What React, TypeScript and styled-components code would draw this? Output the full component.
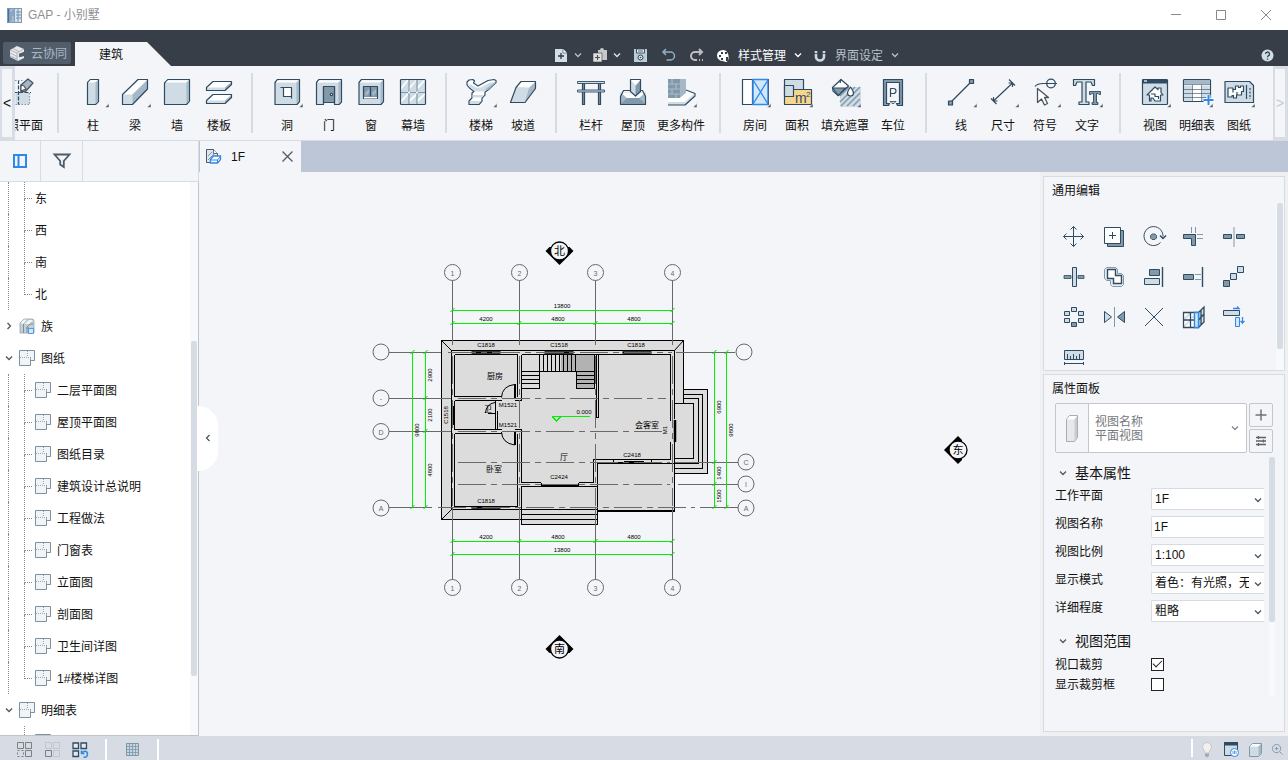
import React from "react";
import styled, { createGlobalStyle } from "styled-components";

const C = {
  ink: "#2f4b62",
  light: "#cfdce5",
  mid: "#a5b8c8",
  slate: "#8299aa",
  blue: "#2f88e8",
  paleBlue: "#d2e8fa",
  surface: "#f4f5f8",
  line: "#d6dce4",
};

const GlobalStyle = createGlobalStyle`
  * { box-sizing: border-box; }
  html, body { margin: 0; height: 100%; }
  body, button, input, select {
    font-family: "Liberation Sans", "Noto Sans CJK SC", sans-serif;
    font-size: 12px;
    color: #111;
  }
  button { border: 0; padding: 0; background: none; cursor: pointer; }
  svg { display: block; flex: none; overflow: visible; }
`;

/* ---------- shell ---------- */

const Shell = styled.div`
  display: flex;
  flex-direction: column;
  height: 100vh;
  overflow: hidden;
  background: ${C.surface};
`;

const TitleBar = styled.header`
  display: flex;
  align-items: center;
  height: 30px;
  flex: none;
  padding-left: 7px;
  gap: 6px;
  background: #fff;
`;

const WindowTitle = styled.h1`
  flex: 1;
  margin: 0;
  font-size: 12px;
  font-weight: 400;
  line-height: 16px;
  color: #8e9092;
`;

const WindowButtons = styled.div`
  display: flex;
`;

const WindowButton = styled.button`
  display: grid;
  place-items: center;
  width: 45px;
  height: 30px;
`;

const MenuBar = styled.nav`
  display: flex;
  align-items: flex-end;
  flex: none;
  height: 36px;
  padding-left: 3px;
  background: #383e48;
`;

const CloudButton = styled.button`
  display: flex;
  align-items: center;
  gap: 6px;
  width: 68px;
  height: 22px;
  margin: 0 4px 2px 0;
  padding-left: 6px;
  border-radius: 2px;
  background: #515d6a;
  color: #a9b8c6;
`;

const BarLabel = styled.span`
  padding-bottom: 2px;
`;

const RibbonTab = styled.button`
  width: 96px;
  height: 24px;
  padding: 0 0 2px 24px;
  text-align: left;
  background: ${C.surface};
  clip-path: polygon(0 0, 72px 0, 100% 100%, 0 100%);
`;

const QuickBar = styled.div`
  display: flex;
  align-items: center;
  gap: 11px;
  height: 22px;
  margin-left: 383px;
  flex: 1;
`;

const QuickButton = styled.button<{ $muted?: boolean; $wide?: boolean }>`
  display: flex;
  align-items: center;
  justify-content: center;
  gap: ${(p) => (p.$wide ? 8 : 6)}px;
  min-width: 17px;
  height: 20px;
  white-space: nowrap;
  color: ${(p) => (p.$muted ? "#b6c0ca" : "#fff")};
`;

const HelpButton = styled.button`
  display: grid;
  place-items: center;
  width: 14px;
  height: 22px;
  margin-right: 14px;
`;

/* ---------- ribbon ---------- */

const Ribbon = styled.section`
  display: flex;
  flex: none;
  height: 75px;
  border-bottom: 1px solid ${C.line};
`;

const RibbonScroll = styled.button`
  flex: none;
  width: 15px;
  height: 74px;
  border: 3px solid #d8dde5;
  border-width: 3px 3px 3px 2px;
  background: ${C.surface};
  font-size: 14px;
  &:disabled { color: #c3cad2; }
`;

const RibbonViewport = styled.div`
  flex: 1;
  min-width: 0;
  overflow: hidden;
`;

const RibbonStrip = styled.div`
  display: flex;
  width: max-content;
  margin-left: -36px;
`;

const RibbonGroup = styled.div`
  display: flex;
  padding: 0 11px 0 13px;
`;

const RibbonDivider = styled.hr`
  width: 2px;
  height: 60px;
  margin: 7px 0 0;
  border: 0;
  background: ${C.line};
`;

const Tool = styled.button<{ $wide?: boolean }>`
  display: flex;
  flex-direction: column;
  align-items: center;
  gap: 12px;
  width: ${(p) => (p.$wide ? 54 : 42)}px;
  padding-top: 12px;
  line-height: 16px;
  white-space: nowrap;
`;

/* ---------- body ---------- */

const Body = styled.div`
  display: flex;
  flex: 1;
  min-height: 0;
`;

const Browser = styled.aside`
  position: relative;
  display: flex;
  flex-direction: column;
  flex: none;
  width: 199px;
`;

const BrowserTools = styled.div`
  display: flex;
  flex: none;
  height: 41px;
  border-right: 1px solid ${C.line};
  border-bottom: 1px solid ${C.line};
`;

const BrowserTool = styled.button`
  display: grid;
  place-items: center;
  width: 41px;
  border-right: 1px solid ${C.line};
  & + & { width: 42px; }
`;

const TreePane = styled.div`
  display: flex;
  flex: 1;
  min-height: 0;
  border-right: 1px solid #c1c5cb;
  border-bottom: 1px solid #c1c5cb;
  background: #fff;
`;

const Tree = styled.ul`
  flex: 1;
  margin: 0;
  padding: 0;
  list-style: none;
  overflow: hidden;
`;

const TreeRow = styled.li`
  display: flex;
  align-items: center;
  height: 32px;
  padding-left: 4px;
  line-height: 16px;
  white-space: nowrap;
`;

const TreeLabel = styled.span`
  padding-top: 2px;
`;

const Toggle = styled.button`
  display: grid;
  place-items: center;
  width: 9px;
  height: 16px;
  margin-right: 6px;
`;

const TreeIcon = styled.span`
  width: 16px;
  margin-right: 6px;
`;

const Rail = styled.span<{ $hidden?: boolean }>`
  width: 16px;
  height: 32px;
  margin-left: 4px;
  border-left: 1px dotted ${(p) => (p.$hidden ? "transparent" : "#8a8a8a")};
`;

const Branch = styled.span<{ $last?: boolean }>`
  width: 8px;
  height: 32px;
  margin-right: 3px;
  &::before, &::after { content: ""; display: block; height: 16px; border-left: 1px dotted #8a8a8a; }
  &::before { border-bottom: 1px dotted #8a8a8a; }
  &::after { border-left-color: ${(p) => (p.$last ? "transparent" : "#8a8a8a")}; }
`;

const Track = styled.div<{ $w: number }>`
  flex: none;
  width: ${(p) => p.$w}px;
  background: #f7f9fa;
`;

const Thumb = styled.div<{ $top: number; $size: number }>`
  width: 6px;
  height: ${(p) => p.$size}px;
  margin: ${(p) => p.$top}px auto 0;
  border-radius: 2px;
  background: #d6dce4;
`;

const CollapseHandle = styled.button`
  position: absolute;
  left: 197px;
  top: 50%;
  display: grid;
  place-items: center;
  width: 21px;
  height: 65px;
  margin-top: -33px;
  border-radius: 0 20px 20px 0;
  background: #fff;
`;

const Main = styled.main`
  display: flex;
  flex-direction: column;
  flex: 1;
  min-width: 0;
`;

const DocTabs = styled.div`
  display: flex;
  flex: none;
  height: 31px;
  background: #bcc6d6;
`;

const DocTab = styled.div`
  display: flex;
  align-items: center;
  width: 102px;
  padding: 0 8px 0 6px;
  border-left: 1px solid #bcc6d6;
  background: ${C.surface};
`;

const DocName = styled.button`
  flex: 1;
  display: flex;
  align-items: center;
  gap: 10px;
`;

const Workspace = styled.div`
  display: flex;
  flex: 1;
  min-height: 0;
`;

const Viewport = styled.div`
  display: flex;
  justify-content: center;
  align-items: center;
  flex: 1;
  min-width: 0;
  overflow: hidden;
`;

const SideColumn = styled.aside`
  display: flex;
  flex-direction: column;
  flex: none;
  gap: 3px;
  width: 248px;
  padding: 4px 3px;
  background: #f0f0f0;
`;

const Panel = styled.section<{ $grow?: boolean }>`
  display: flex;
  flex-direction: column;
  flex: ${(p) => (p.$grow ? "1" : "0 0 195px")};
  min-height: 0;
  overflow: hidden;
  border: 1px solid ${C.line};
  background: ${C.surface};
`;

const PanelTitle = styled.h2`
  flex: none;
  margin: 0;
  padding: 6px 8px 4px;
  font-size: 12px;
  font-weight: 400;
  line-height: 16px;
`;

const Scroller = styled.div`
  display: flex;
  flex: 1;
  min-height: 0;
`;

const EditGrid = styled.div`
  display: grid;
  grid-template-columns: repeat(5, 40px);
  grid-auto-rows: 40px;
  flex: 1;
  padding: 14px 0 0 10px;
  overflow: hidden;
`;

const EditButton = styled.button`
  display: grid;
  place-items: center;
`;

const TypeRow = styled.div`
  display: flex;
  gap: 2px;
  padding: 2px 11px 4px 11px;
`;

const TypePicker = styled.button`
  display: flex;
  align-items: center;
  flex: 1;
  height: 50px;
  padding-right: 7px;
  border: 1px solid #c3c7cc;
  border-radius: 2px;
  background: #fff;
`;

const TypeThumb = styled.span`
  display: grid;
  place-items: center;
  width: 33px;
  height: 48px;
  border-right: 1px solid #c3c7cc;
  background: ${C.surface};
`;

const TypeText = styled.span`
  flex: 1;
  padding: 2px 0 0 6px;
  text-align: left;
  line-height: 14px;
  color: #75797e;
`;

const TypeButtons = styled.div`
  display: grid;
  gap: 2px;
`;

const TypeButton = styled.button`
  display: grid;
  place-items: center;
  width: 24px;
  height: 24px;
  border: 1px solid #c3c7cc;
  border-radius: 2px;
`;

const Properties = styled.div`
  flex: 1;
  padding-left: 11px;
  overflow: hidden;
`;

const PropsScroller = styled(Scroller)`
  flex: 0 0 240px;
  gap: 5px;
  padding-right: 9px;
`;

const SectionHead = styled.button<{ $compact?: boolean }>`
  display: flex;
  align-items: center;
  gap: 8px;
  height: ${(p) => (p.$compact ? 26 : 31)}px;
  padding-left: 4px;
  font-size: 14px;
  line-height: 18px;
`;

const Field = styled.div`
  display: grid;
  grid-template-columns: 96px 1fr;
  align-items: start;
  margin-bottom: 6px;
`;

const FieldLabel = styled.label`
  line-height: 16px;
`;

const FieldBox = styled.div`
  position: relative;
  height: 22px;
  border: 1px solid ${C.line};
  border-right: 0;
  border-radius: 2px 0 0 2px;
  background: #fff;
  & > svg { position: absolute; right: 2px; top: 7px; pointer-events: none; }
`;

const Select = styled.select`
  appearance: none;
  width: 97px;
  height: 20px;
  padding: 0 0 0 3px;
  border: 0;
  background: transparent;
  outline: none;
  text-overflow: clip;
`;

const TextInput = styled.input`
  width: 100%;
  height: 20px;
  padding: 0 0 0 2px;
  border: 0;
  background: transparent;
  outline: none;
`;

const CheckRow = styled.div`
  display: grid;
  grid-template-columns: 96px 1fr;
  align-items: center;
  height: 20px;
  line-height: 16px;
  & > label { padding-top: 2px; }
`;

const Checkbox = styled.input`
  appearance: none;
  display: grid;
  place-items: center;
  width: 13px;
  height: 13px;
  margin: 0;
  border: 1px solid #222;
  background: #fff;
  &:checked::before {
    content: "";
    width: 8px;
    height: 4px;
    margin-bottom: 3px;
    border: solid #222;
    border-width: 0 0 1px 1px;
    transform: rotate(-45deg);
  }
`;

/* ---------- status bar ---------- */

const StatusBar = styled.footer`
  display: flex;
  align-items: center;
  flex: none;
  height: 24px;
  padding: 3px 0 0 10px;
  background: #d7dce4;
`;

const StatusButton = styled.button<{ $w?: number }>`
  display: grid;
  place-items: center;
  width: ${(p) => p.$w ?? 28}px;
  height: 21px;
`;

const StatusDivider = styled.span<{ $tight?: boolean }>`
  width: 2px;
  height: ${(p) => (p.$tight ? 18 : 21)}px;
  margin: ${(p) => (p.$tight ? "0 2px 3px 0" : "0 11px")};
  background: #fff;
`;

const Spacer = styled.span`
  flex: 1;
`;

/* ---------- small glyphs ---------- */

const Chevron = ({ dir = "down", color = "#4c5763", size = 8 }: { dir?: "down" | "right" | "left"; color?: string; size?: number }) => {
  const d = { down: "M1 2.5 4 5.5 7 2.5", right: "M2.5 1 5.5 4 2.5 7", left: "M5.5 1 2.5 4 5.5 7" }[dir];
  return (
    <svg width={size} height={size} viewBox="0 0 8 8" fill="none" stroke={color} strokeWidth="1.3">
      <path d={d} />
    </svg>
  );
};

const AppLogo = () => (
  <svg width="15" height="15" viewBox="0 0 15 15">
    <rect width="15" height="15" fill="#7f9fbe" />
    <path d="M0 0h2v15H0z" fill="#4a7299" />
    <path d="M3 1h4v13H3z" fill="#a3bbd0" />
    <path d="M8 1h6v13H8z" fill="#d7e2eb" />
    <path d="M4 4v9M6 2v6M11 1v13M9 4h5M9 7h5M9 10h5" stroke="#6f93b3" fill="none" />
    <path d="M.5.5h14v14H.5z" fill="none" stroke="#7f9ab2" />
  </svg>
);

const CloudLogo = () => (
  <svg width="16" height="18" viewBox="0 0 16 18">
    <path d="M1 6 8 2l7 3v3l-5 2v3l5-1v2l-6 3-8-4z" fill="#e6e8ea" />
    <path d="M1 6l7 3 7-4M1 9l7 3.500M1 12l7 3M8 9v8M4 4.500l6 3" stroke="#9aa2aa" strokeWidth=".7" fill="none" />
    <path d="M10 10l5-2v4l-5 1z" fill="#515d6a" />
  </svg>
);

/* ---------- ribbon drawings (28 x 28) ---------- */

const Frame = () => (
  <>
    <path d="M2 4.500 4.500 1.500H26.500V23.500L24 26.500H2z" fill={C.light} stroke={C.ink} />
    <path d="M3 4.500 4.800 2.300H25.500L23.500 4.500z" fill="#fff" />
    <path d="M23.500 4.500 26 2.500V23L23.500 25.500z" fill={C.mid} />
  </>
);

const toolArt: Record<string, React.ReactNode> = {
  refplane: (
    <>
      <path d="M10.500 14.500h14v12h-14z" fill={C.light} />
      <path d="M13.500 2v25M3 14.500h23" stroke={C.ink} strokeDasharray="4 1.500" fill="none" />
      <path d="M7 2.500h12M24.500 15v11.500H4" stroke={C.slate} strokeDasharray="1.500 1.500" fill="none" />
      <path d="M16 7 23 1l5 4-7 8-5 1z" fill={C.mid} stroke="#4a545e" strokeWidth="1.3" />
      <path d="M16 7l3 1 2 3-5 2z" fill="#fff" stroke="#4a545e" />
    </>
  ),
  column: (
    <>
      <path d="M8.500 4.500 11.500 1.500h8v22l-3 3h-8z" fill={C.light} stroke={C.ink} />
      <path d="M9 4.500 11.700 2h7.300l-2.500 2.500z" fill="#fff" />
      <path d="M16.500 4.500 19 2v21.500L16.500 26z" fill={C.mid} />
    </>
  ),
  beam: (
    <>
      <path d="M1.500 16.500 17 1.500h9.500v9.500L11.500 26.500h-10z" fill={C.light} />
      <path d="M2 16.500 17 2h9L11.500 16.500z" fill="#fff" />
      <path d="M11.500 16.500 26.500 2v9L11.500 26.500z" fill={C.mid} />
      <path d="M1.500 16.500 17 1.500h9.500v9.500L11.500 26.500h-10z" fill="none" stroke={C.ink} />
    </>
  ),
  wall: (
    <>
      <path d="M1.500 5 5 1.500H26.500V23L23.500 26.500H1.500z" fill={C.light} stroke={C.ink} />
      <path d="M2.500 4.500 5 2.200H25.500L23.500 4.500z" fill="#fff" />
      <path d="M23.500 4.500 26 2.500V23L23.500 25.500z" fill={C.mid} />
    </>
  ),
  slab: (
    <>
      {[3, 16].map((y) => (
        <g key={y} transform={`translate(0 ${y})`}>
          <path d="M1.500 7.500 8 .5H26.500V3.500L20 9.500H1.500z" fill={C.light} />
          <path d="M2 6.500 8 1H26L20 6.500z" fill="#fff" />
          <path d="M20 6.500 26.500 1v2.500L20 9.500z" fill={C.mid} />
          <path d="M1.500 6.500 8 .5H26.500V3.500L20 9.500H1.500z" fill="none" stroke={C.ink} />
        </g>
      ))}
    </>
  ),
  opening: (
    <>
      <Frame />
      <path d="M10.500 10h8v8.500h-8z" fill="#fff" />
      <path d="M7.500 9.500h11v11M10.500 9.500v9h8" fill="none" stroke={C.ink} />
    </>
  ),
  door: (
    <>
      <path d="M1.500 4.500 4 1.500H26.500V24L24 26.500H19.500V8.500H8.500V26.500H1.500z" fill={C.light} stroke={C.ink} />
      <path d="M2.500 4.500 4.300 2.300H25.500L23.500 4.500z" fill="#fff" />
      <path d="M23.500 4.500 26 2.500V23.500L23.500 26z" fill={C.mid} />
      <path d="M8.500 8.500h11v16h-11z" fill={C.slate} stroke={C.ink} />
      <circle cx="16.500" cy="16.500" r="1.200" fill="#fff" stroke={C.ink} />
    </>
  ),
  window: (
    <>
      <Frame />
      <path d="M6.500 8.500h14v12h-14z" fill={C.slate} stroke={C.ink} />
      <path d="M8 15l4-4v4l-3 3zM15 15l4-4v4l-3 3z" fill={C.mid} />
      <path d="M13.500 8.500v10" stroke={C.ink} />
      <path d="M7 19h13v1.500H7z" fill="#fff" />
    </>
  ),
  curtain: (
    <>
      <rect x="1.500" y="1.500" width="25" height="25" fill={C.light} />
      <path d="M2 9l6-7h2L2 12zM10 9l7-7h1L10 12zM18 9l7-7h1v1l-8 9zM2 22l7-7v2l-7 8zM10 22l8-7v2l-8 8zM18 22l8-7v2l-8 8z" fill="#fff" />
      <path d="M10 2v24M18 2v24M2 14.500h24" stroke={C.slate} fill="none" />
      <rect x="1.500" y="1.500" width="25" height="25" rx="1" fill="none" stroke={C.ink} />
      <circle cx="10" cy="14.500" r="1" fill="#fff" />
      <circle cx="18" cy="14.500" r="1" fill="#fff" />
    </>
  ),
  stair: (
    <>
      <path
        d="M0 4 2 2 6 1.500 7.500 3 6.500 5 11 8 21 2.500 27 1.500 29 2.500V4.500L21 12 18 14V17L15 20V23L12 26.500H2V23L5 20V15L7 13.500 2 9.500 0 7z"
        fill="#fff"
        stroke={C.ink}
      />
      <path d="M.8 6.500 4 6.500 9 9.500h5L22 5l5-1-7 7.500-3 2H8L2.500 9zM5.500 17h12L15 19.500H5.500zM3 23h11.500l-3 3H3z" fill={C.light} />
      <path d="M18 11.500 28.500 3.500V5L21 12z" fill={C.mid} />
    </>
  ),
  ramp: (
    <>
      <path d="M1.500 24.500 7 9.500l5-6h14.500v7L16 24.500z" fill={C.light} />
      <path d="M7 9 12 4h14l-6 5.500z" fill="#fff" />
      <path d="M20 10 26.500 4v7L16 24z" fill={C.mid} />
      <path d="M1.500 24.500 7 9.500l5-6h14.500v7L16 24.500z" fill="none" stroke={C.ink} />
    </>
  ),
  railing: (
    <>
      <path d="M5.500 5.500h2v21h-2zM21.500 5.500h2v21h-2z" fill={C.slate} stroke={C.ink} />
      <path d="M.5 3.500h27v2H.5zM.5 12h27v2H.5z" fill={C.light} stroke={C.ink} strokeWidth=".9" />
    </>
  ),
  roof: (
    <>
      <path d="M1.500 14.500h25v12h-25z" fill={C.mid} />
      <path d="M1.500 26 8 20h12l6.500 6z" fill={C.slate} />
      <path d="M1.500 14.500h25L20 20H8z" fill="#fff" />
      <path d="M11.500 2h10v11L16.500 18l-5-5z" fill={C.light} />
      <path d="M16.500 8l5-6v11l-5 5z" fill={C.slate} />
      <path d="M11.500 2h10l-5 5z" fill="#fff" />
      <path d="M11.500 12.500h-7l-3 6v8h25v-8l-3-6h-2M11.500 1.500h10v12l-5 4.500-5-4.500z" fill="none" stroke={C.ink} />
    </>
  ),
  parts: (
    <>
      <path d="M1 1h12v19H1z" fill={C.slate} />
      <path d="M13 4l6-3v14l-6 5z" fill={C.mid} />
      <path d="M13 1h6v3l-6 3z" fill={C.mid} />
      <path d="M1 6h12M1 11h12M1 16h12M5 1v5M9 6v5M5 11v5M9 16v4" stroke="#a9bccb" fill="none" />
      <path d="M1 20h12l6-5v-3l9 4v2l-9 9H1z" fill="#fff" />
      <path d="M1 27v-3h17l9-8.500V18l-8 9z" fill={C.light} />
      <path d="M19 12l9 3.500v2.500L18 27H1" fill="none" stroke={C.ink} />
    </>
  ),
  room: (
    <>
      <path d="M1.500 1.500h10v25h-10z" fill="#fff" stroke={C.ink} />
      <path d="M12 1.500h15v25H12z" fill={C.paleBlue} stroke={C.blue} strokeWidth="1.500" />
      <path d="M12 2l15 24M27 2 12 26" stroke={C.blue} strokeWidth="1.300" />
      <path d="M27.500 1v26" stroke={C.ink} strokeWidth=".7" />
    </>
  ),
  area: (
    <>
      <path d="M1.500 1.500h19v10h-19z" fill={C.light} stroke={C.ink} />
      <path d="M1.500 11.500h27v15h-27z" fill="#f6d78d" stroke={C.ink} />
      <path d="M1.500 7.500h9v11h-9z" fill={C.light} stroke={C.ink} />
      <text x="12" y="25" fontSize="14" fill={C.ink}>m</text>
      <text x="23" y="19" fontSize="8" fill={C.ink}>2</text>
    </>
  ),
  fill: (
    <>
      <path d="M9 9h21v20H9z" fill={C.light} />
      <path d="M9 18l9-9M9 24 24 9M10 28l19-19M16 28l13-13M22 28l7-7" stroke={C.slate} strokeWidth="1.500" />
      <path d="M1.500 9.500 10 1.500l7.500 6.500L7 17.500 2 13z" fill="#fff" stroke={C.ink} />
      <path d="M1.500 10h13l-7 7.500z" fill={C.slate} stroke={C.ink} />
      <path d="M10 1.500 9 5" stroke={C.ink} />
      <path d="M19.500 9c2 3 3 4 3 6a3 3 0 0 1-6 0c0-2 1-3 3-6z" fill="#fff" stroke={C.ink} />
    </>
  ),
  parking: (
    <>
      <path d="M4.500 1.500h19v26h-5l-1-2h3V4.500H7.500v21h3l-1 2h-5z" fill={C.slate} stroke={C.ink} />
      <path d="M11.500 19V10.500H14.500a2.500 2.500 0 0 1 0 5h-3" fill="none" stroke={C.ink} strokeWidth="1.200" />
      <path d="M11 23.500h6l-2 2h-2z" fill={C.light} stroke={C.ink} strokeWidth=".8" />
    </>
  ),
  line: (
    <>
      <path d="M3.500 24.500 25 3" stroke={C.ink} />
      <path d="M1.500 23h4v4h-4zM22.500 1.500h4v4h-4z" fill={C.slate} stroke={C.ink} />
    </>
  ),
  dimension: (
    <path d="M4.500 23 23.500 5M2 20.500 7.500 26M20 1.500 26 7.500M4.500 23v-4M4.500 23h4M23.500 5h-4M23.500 5v4" fill="none" stroke={C.ink} />
  ),
  symbol: (
    <>
      <path d="M4 8.500C6 6 8 5.500 12 5.500h14" fill="none" stroke={C.ink} />
      <circle cx="20" cy="5.500" r="4.300" fill="none" stroke={C.ink} strokeWidth="1.300" />
      <path d="M6.500 10.500v14l4-3.500 3 6 3-1.500-3-6h4z" fill="#fff" stroke="#4a545e" strokeWidth="1.300" />
    </>
  ),
  text: (
    <>
      <path d="M.5 1.500h21v6h-2L18 4h-5v20h3v2.500H6V24h3V4H4L2.500 7.500h-2z" fill={C.light} stroke={C.ink} />
      <path d="M16.500 13.500h11v3H26L25 15.500h-1.500v9h1.500v2h-6v-2h1.500v-9H19l-1 1h-1.500z" fill={C.slate} stroke={C.ink} strokeWidth=".9" />
    </>
  ),
  view: (
    <>
      <rect x="1.500" y="1.500" width="25" height="25" rx="1" fill={C.light} stroke={C.ink} />
      <path d="M1.500 1.500h25v4h-25z" fill={C.ink} />
      <path d="M3 3h3" stroke="#fff" />
      <path d="M6 17l8-8 3 2.500V10h3v4.500l2 2.500h-2.500v6H14l-2-3h-2v3H8.500v-6z" fill="#fff" stroke={C.ink} />
      <path d="M10 16h4v2.500h3.500V21" fill="none" stroke={C.ink} />
    </>
  ),
  schedule: (
    <>
      <rect x=".5" y="1.500" width="27" height="22" rx="1" fill="#fff" stroke={C.ink} />
      <path d="M1 2h26v4H1z" fill={C.mid} />
      <path d="M1 7.500h8v15.500H1zM19 7.500h8v15.500h-8z" fill={C.light} />
      <path d="M1 6.500h26M1 11.500h26M1 15.500h26M1 19.500h26M9.500 7v16M18.500 7v16" stroke={C.ink} strokeWidth=".8" opacity=".75" />
      <path d="M25.500 17v10M20.500 22h10" stroke="#fff" strokeWidth="4" />
      <path d="M25.500 17v10M20.500 22h10" stroke={C.blue} strokeWidth="2" />
    </>
  ),
  sheet: (
    <>
      <path d="M0 3.500h24.500l4 4v17H0z" fill={C.light} stroke={C.ink} strokeWidth="1.200" />
      <path d="M3 10h5v1.500h2.500V8h3v1.500h2V8h3v5.500h-2v3.500h-5v3h-3v-2.500H7v1.500H3z" fill="#fff" stroke={C.ink} />
      <path d="M8 11.500v3M12 14v3" stroke={C.ink} />
      <path d="M21.500 7v14" stroke={C.ink} />
      <path d="M25 10v11" stroke={C.ink} strokeDasharray="2 1.500" />
    </>
  ),
};

const ToolIcon = ({ name, menu }: { name: string; menu?: boolean }) => (
  <svg width="28" height="28" viewBox="0 0 28 28" fill="none" strokeWidth="1.200" strokeLinejoin="round">
    {toolArt[name]}
    {menu && <path d="M26 29.500h4V25.500z" fill="#4d5359" stroke="#f4f5f8" strokeWidth=".6" />}
  </svg>
);

type ToolDef = { icon: string; label: string; menu?: boolean; wide?: boolean };

const ribbonGroups: ToolDef[][] = [
  [{ icon: "refplane", label: "参照平面", wide: true }],
  [
    { icon: "column", label: "柱", menu: true },
    { icon: "beam", label: "梁", menu: true },
    { icon: "wall", label: "墙" },
    { icon: "slab", label: "楼板" },
  ],
  [
    { icon: "opening", label: "洞", menu: true },
    { icon: "door", label: "门" },
    { icon: "window", label: "窗" },
    { icon: "curtain", label: "幕墙" },
  ],
  [
    { icon: "stair", label: "楼梯", menu: true },
    { icon: "ramp", label: "坡道" },
  ],
  [
    { icon: "railing", label: "栏杆" },
    { icon: "roof", label: "屋顶" },
    { icon: "parts", label: "更多构件", menu: true, wide: true },
  ],
  [
    { icon: "room", label: "房间", menu: true },
    { icon: "area", label: "面积", menu: true },
    { icon: "fill", label: "填充遮罩", menu: true, wide: true },
    { icon: "parking", label: "车位" },
  ],
  [
    { icon: "line", label: "线", menu: true },
    { icon: "dimension", label: "尺寸", menu: true },
    { icon: "symbol", label: "符号", menu: true },
    { icon: "text", label: "文字", menu: true },
  ],
  [
    { icon: "view", label: "视图", menu: true },
    { icon: "schedule", label: "明细表", menu: true },
    { icon: "sheet", label: "图纸", menu: true },
  ],
];

/* ---------- quick access ---------- */

const quickArt: Record<string, React.ReactNode> = {
  create: (
    <>
      <path d="M1 1h8l4 4v9H1z" fill="#d2dfe8" />
      <path d="M9 1v4h4" fill="#fff" stroke="#383e48" strokeWidth=".6" />
      <path d="M7 5v6M4 8h6" stroke="#2f3a46" strokeWidth="1.300" />
    </>
  ),
  paste: (
    <>
      <path d="M5 2h2a2 2 0 0 1 4 0h3v10H5z" fill="#c8c8c8" />
      <path d="M0 5h9v9H0z" fill="#e0e0e0" stroke="#383e48" strokeWidth=".6" />
      <path d="M4.500 7v5M2 9.500h5" stroke="#4a4f56" strokeWidth="1.200" />
    </>
  ),
  save: (
    <>
      <path d="M0 1h13v13H0z" fill="#b9cedc" />
      <path d="M2.500 1h8v4h-8z" fill="#e8eef2" stroke="#383e48" strokeWidth=".9" />
      <path d="M4 3h5" stroke="#383e48" strokeWidth=".8" />
      <circle cx="6.500" cy="9.500" r="2.500" fill="#dce7ee" stroke="#383e48" />
      <circle cx="6.500" cy="9.500" r=".8" fill="#383e48" />
    </>
  ),
  undo: <path d="M4 1 1 4l3 3M1 4h7.500a4 4 0 0 1 0 8H4.500" fill="none" stroke="#8fb0c8" strokeWidth="1.500" />,
  redo: <path d="M9 1l3 3-3 3M12 4H5a4 4 0 0 0 0 8h2M9 12h1M12 12h1" fill="none" stroke="#bdbdbd" strokeWidth="2" />,
  palette: (
    <>
      <path d="M7 2a6 5.500 0 1 0 0 11c1 0 1 1 3 1 4 0 4-12-3-12z" fill="#fff" />
      <path d="M3 7h2v2H3zM5 4h2v2H5zM9 4h2v2H9zM5 10h2v2H5zM10 9h2v4h-2z" fill="#383e48" />
    </>
  ),
  magnet: (
    <>
      <path d="M3 3v5.500a4 4 0 0 0 8 0V3" fill="none" stroke="#c9d9e6" strokeWidth="2.600" />
      <path d="M1 5.500h4M9 5.500h4" stroke="#383e48" strokeWidth=".8" />
    </>
  ),
};

const QuickIcon = ({ name }: { name: string }) => (
  <svg width="14" height="15" viewBox="0 0 14 15">{quickArt[name]}</svg>
);

/* ---------- browser tree ---------- */

const SheetIcon = () => (
  <svg width="16" height="16" viewBox="0 0 16 16" fill="none">
    <path d="M.5.5h15v10h-4v5H.5z" fill="#f1f4f7" stroke="#7f90a3" />
    <path d="M8.500 1v6" stroke="#9aa8b6" strokeDasharray="1 1" />
    <path d="M1 7.500h9" stroke="#9aa8b6" strokeDasharray="1 1" />
    <path d="M11.500 7v3.500h4" stroke="#7f90a3" strokeWidth=".8" />
  </svg>
);

const FamilyIcon = () => (
  <svg width="16" height="16" viewBox="0 0 16 16">
    <path d="M1 5l4-4h9l1 2v12H1z" fill="#c4ced7" />
    <path d="M1 5l4-4h3L4 6zM6 6l4-4h4l-4 4z" fill="#f2f5f7" />
    <path d="M4.500 6v9M8 15V9l3-3h3M10 10H7" stroke="#7d8d9b" fill="none" />
    <path d="M1 5l4-4h9l1 2v12H1z" stroke="#95a3af" strokeWidth=".8" fill="none" />
    <path d="M9.500 10.500h5v5h-5z" fill={C.paleBlue} stroke={C.blue} strokeWidth=".8" />
  </svg>
);

type Node = { label: string; kind: "view" | "sheet" | "parent"; last?: boolean; open?: boolean; icon?: "family" | "sheet"; noRail?: boolean };

const nodes: Node[] = [
  { label: "东", kind: "view" },
  { label: "西", kind: "view" },
  { label: "南", kind: "view" },
  { label: "北", kind: "view", last: true },
  { label: "族", kind: "parent", icon: "family" },
  { label: "图纸", kind: "parent", icon: "sheet", open: true },
  { label: "二层平面图", kind: "sheet" },
  { label: "屋顶平面图", kind: "sheet" },
  { label: "图纸目录", kind: "sheet" },
  { label: "建筑设计总说明", kind: "sheet" },
  { label: "工程做法", kind: "sheet" },
  { label: "门窗表", kind: "sheet" },
  { label: "立面图", kind: "sheet" },
  { label: "剖面图", kind: "sheet" },
  { label: "卫生间详图", kind: "sheet" },
  { label: "1#楼梯详图", kind: "sheet", last: true },
  { label: "明细表", kind: "parent", icon: "sheet", open: true },
  { label: "", kind: "sheet", noRail: true },
];

const TreeNode = ({ node }: { node: Node }) =>
  node.kind === "parent" ? (
    <TreeRow>
      <Toggle aria-label={`展开 ${node.label}`}>
        <Chevron dir={node.open ? "down" : "right"} />
      </Toggle>
      <TreeIcon>{node.icon === "family" ? <FamilyIcon /> : <SheetIcon />}</TreeIcon>
      <TreeLabel>{node.label}</TreeLabel>
    </TreeRow>
  ) : (
    <TreeRow>
      <Rail $hidden={node.noRail} />
      <Branch $last={node.last} />
      {node.kind === "sheet" && (
        <TreeIcon>
          <SheetIcon />
        </TreeIcon>
      )}
      <TreeLabel>{node.label}</TreeLabel>
    </TreeRow>
  );

/* ---------- edit commands (24 x 24) ---------- */

const editArt: [string, React.ReactNode][] = [
  ["移动", <path d="M11.500 1.500v20M1.500 11.500h20M8.500 4.500l3-3 3 3M8.500 18.500l3 3 3-3M4.500 8.500l-3 3 3 3M18.500 8.500l3 3-3 3" stroke={C.ink} fill="none" />],
  ["复制", <><path d="M5.500 5.500h16v16h-16z" fill={C.slate} stroke={C.ink} /><path d="M2.500 2.500h16v16h-16z" fill="#fff" stroke={C.ink} /><path d="M10.500 7v7M7 10.500h7" stroke={C.ink} /></>],
  ["旋转", <><path d="M18.500 17.500A9.500 9.500 0 1 1 21 11.500" fill="none" stroke={C.ink} /><path d="M18 10.500l3 3 3-3" fill="none" stroke={C.ink} strokeWidth="1.500" /><path d="M10 9h3l1.500 1.500v2.500L13 14.500h-3L8.500 13v-2.500z" fill={C.slate} stroke={C.ink} strokeWidth=".8" /></>],
  ["修剪", <><path d="M1.500 9.500h12v11h-4v-7h-8z" fill={C.slate} stroke={C.ink} /><path d="M9.500 2v6M13.500 2v6M15 9.500h6M15 13.500h6" stroke={C.slate} /></>],
  ["打断", <><path d="M1.500 9.500h8v4h-8zM14.500 9.500h8v4h-8z" fill={C.slate} stroke={C.ink} /><path d="M12 2v20" stroke={C.slate} /></>],
  ["拆分", <><path d="M2 10.500h7v3H2zM16 10.500h6v3h-6z" fill={C.slate} stroke={C.ink} strokeWidth=".8" /><path d="M10.500 2.500h4v19h-4z" fill={C.light} stroke={C.ink} /></>],
  ["合并", <><path d="M2.500 4.500l2-2h9l2 2v4h4l2 2v9l-2 2h-9l-2-2v-4h-4l-2-2z" fill="#e6ecf1" stroke={C.slate} /><path d="M5.500 4.500h8v6h6v8h-8v-5h-6z" fill="#fff" stroke={C.ink} strokeWidth="1.400" /></>],
  ["对齐", <><path d="M7.500 4.500h10v6h-10z" fill={C.slate} stroke={C.ink} /><path d="M2.500 13.500h15v6h-15z" fill={C.light} stroke={C.ink} /><path d="M20.500 2v20" stroke={C.ink} strokeWidth="1.400" /></>],
  ["延伸", <><path d="M1.500 9.500h10v5h-10z" fill={C.slate} stroke={C.ink} /><path d="M13 9.500h6M13 14.500h6" stroke={C.slate} /><path d="M20.500 2v20" stroke={C.ink} strokeWidth="1.400" /></>],
  ["线性阵列", <><path d="M1.500 15.500h6v6h-6z" fill={C.slate} stroke={C.ink} /><path d="M8.500 8.500h6v6h-6zM15.500 1.500h6v6h-6z" fill={C.light} stroke={C.ink} /></>],
  ["环形阵列", <><path d="M9.500 2.500h5v4h-5zM2.500 6.500h5v4h-5zM16.500 6.500h5v4h-5zM2.500 13.500h5v4h-5zM16.500 13.500h5v4h-5z" fill={C.light} stroke={C.ink} /><path d="M9.500 17.500h5v4h-5z" fill={C.slate} stroke={C.ink} /></>],
  ["镜像", <><path d="M2.500 6.500v11l7-5.500z" fill={C.light} stroke={C.ink} /><path d="M22.500 6.500v11l-7-5.500z" fill={C.slate} stroke={C.ink} /><path d="M12.500 2v20" stroke={C.slate} /></>],
  ["删除", <path d="M3 3l18 18M21 3 3 21" stroke={C.ink} />],
  ["体块", <><path d="M1.500 7.500h15v15h-15z" fill="#fff" /><path d="M2 13l5-5h1v2l-6 6zM9 13l4-4v4zM2 20l6-5v2l-6 5zM16.500 7.500l5-5v14l-5 6z" fill={C.light} /><path d="M1.500 7.500h15v15h-15zM1.500 15h15M8.500 7.500v15M16.500 7.500l5.500-5.500v15l-5.500 5.500M19 5v15M16.500 15l5.500-6" fill="none" stroke={C.ink} strokeWidth="1.300" /><path d="M12.500 7.500h4v15h-4z" fill={C.paleBlue} stroke={C.blue} strokeWidth="1.400" /></>],
  ["偏移", <><path d="M1.500 5.500h16v5h-16z" fill={C.light} stroke={C.ink} /><path d="M13.500 12.500h4v9h-4z" fill={C.paleBlue} stroke={C.blue} /><path d="M11 3.500h6l-2-2M20.500 12v6l2-2M20.500 18l-2-2" fill="none" stroke={C.blue} strokeWidth="1.300" /></>],
  ["测量", <><path d="M2.500 5.500h19v9h-19z" fill={C.light} stroke={C.ink} /><path d="M5.500 14V9M8.500 14v-3M11.500 14V9M14.500 14v-3M17.500 14V9M2 18.500h20M2.500 17v3M21.500 17v3" stroke={C.ink} /></>],
];

/* ---------- floor plan ---------- */

const G = "#696969";

const Bubble = ({ x, y, label }: { x: number; y: number; label?: string }) => (
  <>
    <circle cx={x} cy={y} r="8" fill={C.surface} stroke={G} />
    {label && (
      <text x={x} y={y + 3} fontSize="7" fill={G} textAnchor="middle">
        {label}
      </text>
    )}
  </>
);

const Note = ({ x, y, children, size = 6, vertical }: { x: number; y: number; children: string; size?: number; vertical?: boolean }) => (
  <text
    x={x}
    y={y + 2}
    fontSize={size}
    fill="#000"
    textAnchor="middle"
    transform={vertical ? `rotate(-90 ${x} ${y})` : undefined}
  >
    {children}
  </text>
);

const Compass = ({ x, y, turn, label }: { x: number; y: number; turn: number; label: string }) => (
  <>
    <path d={`M${x - 14} ${y}L${x} ${y - 14}L${x + 14} ${y}L${x + 10} ${y + 4}H${x - 10}z`} transform={`rotate(${turn} ${x} ${y})`} fill="#000" />
    <circle cx={x} cy={y} r="9" fill={C.surface} stroke="#000" strokeWidth="1.300" />
    <text x={x} y={y + 4} fontSize="11" textAnchor="middle" fill="#000">
      {label}
    </text>
  </>
);

const columnAxes = [452.5, 519.5, 595.5, 672.5];
const dash = "28 5 6 5";

const FloorPlan = () => (
  <svg width="841" height="564" viewBox="199 172 841 564" role="img" aria-label="1F 平面图" fill="none" stroke="none">
    {/* slabs, eaves and steps */}
    <path d="M441.500 340.500H683.500V389.500H707.500V473.500H674.500V510.500H597.500V524.500H521.500V519.500H441.500z" fill="#dcdcdc" />
    <path d="M561 354.500H594.500V388.500H576.500V371.500H561z" fill="#b2b2b2" />

    <g stroke="#000" shapeRendering="crispEdges">
      <path d="M683.500 403.500V340.500H441.500V519.500H597.500" />
      <path d="M451.500 509.500V350.500H674.500V419M451.500 509.500H597.500" />
      <path d="M441.500 340.500l10 10M683.500 340.500l-9 10M441.500 519.500l10-10" shapeRendering="auto" />
      <path d="M454.500 354.500H517.500V396.500M454.500 354.500V396.500H502M521.500 400.500H515" />
      <path d="M454.500 400.500V429.500H501.500M454.500 400.500H502M495.500 400.500V429.500M497 411V429" />
      <path d="M454.500 433.500V506.500H517.500V433.500M454.500 433.500H501.500M515 429.500H521.500" />
      <path d="M521.500 354.500H670.500V420.500M521.500 354.500V400.500M521.500 429.500V482.500H541M579 482.500H593.500V459.500H670.500V442" />
      <path d="M521.500 524.500V486.500H597.500V524.500zM597.500 486.500V463.500H674.500V442M521.500 514.500H597.500M521.500 519.500H597.500" />
      <path d="M596.500 354.500V417.500H598.500V354.500" />
      <path d="M597.500 510.500H674.500" strokeWidth="2" />
      <path d="M674.500 463.500V510.500" />
      <path d="M683.500 389.500H707.500V473.500H674.500M683.500 394.500H702.500V468.500H674.500M683.500 398.500H698.500V463.500H674.500M674.500 403.500H693.500V458.500H674.500" />
      <path d="M521.500 371.500H576.500M539.500 354.500V388.500M521.500 375.500h18M521.500 379.500h18M521.500 383.500h18M521.500 388.500h18" />
      <path d="M543.500 354.500v17M547.500 354.500v17M551.500 354.500v17M555.500 354.500v17M559.500 354.500v17M563.500 354.500v17M567.500 354.500v17M571.500 354.500v17M575.500 354.500v17" />
      <path d="M576.500 371.500V388.500H594.500V354.500M576.500 371.500h18M576.500 375.500h18M576.500 379.500h18M576.500 383.500h18" />
      <path d="M541.500 482.500v4M578.500 482.500v4M613.500 459.500v3h38v-3" />
      <path d="M488 413.500h7.500" />
    </g>

    {/* windows and door leaves */}
    <path
      d="M471.500 352.500h29M544.500 352.500h29M622.500 352.500h29M471.500 507.500h29M453 406v19M675 420v22"
      stroke="#000"
      strokeWidth="2.500"
    />
    <path d="M541 485.500h38M624 462h20" stroke="#000" strokeWidth="2" />
    <path d="M515 384v15M515 431v14" stroke="#000" strokeWidth="2" />
    <path d="M514.500 384.500Q502 386 501.500 397.500M514.500 445Q502 443 501.500 432M495 402.500Q486 404 485.500 413" stroke="#000" />

    {/* axes */}
    <g stroke={G} shapeRendering="crispEdges">
      {columnAxes.map((x) => (
        <React.Fragment key={x}>
          <path d={`M${x} 280V345M${x} 508V580`} />
          <path d={`M${x} 356V506`} strokeDasharray={dash} />
        </React.Fragment>
      ))}
      <path d="M389 352.500H441M389 398.500H451M389 431.500H451M389 507.500H432" />
      <path d="M676 352.500H735M675 462.500H738M678 484.500H738M700 507.500H738" />
      <path
        d="M448 352.500H672M458 398.500H565M570 398.500H666M458 431.500H666M458 462.500H670M458 484.500H670M438 507.500H695"
        strokeDasharray={dash}
      />
    </g>

    {/* dimension strings */}
    <g stroke="#00f000" shapeRendering="crispEdges">
      <path d="M452 310.500H673M452 323.500H673M452 541.500H673M452 554.500H673" />
      <path d="M412.500 352V508M425.500 352V508M714.500 352V508M726.500 352V508" />
      <path d="M552 416.500H590M552.500 417l4 4 4-4" />
    </g>
    <g stroke="#00d000">
      {columnAxes.map((x) => (
        <path key={x} d={`M${x - 2} 325l4-4M${x - 2} 543l4-4`} />
      ))}
      <path d="M450.500 312l4-4M670.500 312l4-4M450.500 556l4-4M670.500 556l4-4" />
      <path d="M423.500 354l4-4M423.500 400l4-4M423.500 433l4-4M423.500 509l4-4M410.500 354l4-4M410.500 509l4-4" />
      <path d="M712.500 354l4-4M712.500 464l4-4M712.500 486l4-4M712.500 509l4-4M724.500 354l4-4M724.500 509l4-4" />
    </g>

    <Note x={562} y={306}>13800</Note>
    <Note x={486} y={319}>4200</Note>
    <Note x={558} y={319}>4800</Note>
    <Note x={634} y={319}>4800</Note>
    <Note x={486} y={537}>4200</Note>
    <Note x={558} y={537}>4800</Note>
    <Note x={634} y={537}>4800</Note>
    <Note x={562} y={550}>13800</Note>
    <Note x={430} y={375} vertical>2900</Note>
    <Note x={430} y={415} vertical>2100</Note>
    <Note x={430} y={470} vertical>4800</Note>
    <Note x={417} y={430} vertical>9800</Note>
    <Note x={719} y={407} vertical>6900</Note>
    <Note x={719} y={473} vertical>1400</Note>
    <Note x={719} y={496} vertical>1500</Note>
    <Note x={731} y={430} vertical>9800</Note>
    <Note x={486} y={345}>C1818</Note>
    <Note x={559} y={345}>C1518</Note>
    <Note x={636} y={345}>C1818</Note>
    <Note x={446} y={415} vertical>C1518</Note>
    <Note x={486} y={501}>C1818</Note>
    <Note x={559} y={477}>C2424</Note>
    <Note x={632} y={455}>C2418</Note>
    <Note x={508} y={405}>M1521</Note>
    <Note x={508} y={425}>M1521</Note>
    <Note x={584} y={412}>0.000</Note>
    <Note x={495} y={377} size={8}>厨房</Note>
    <Note x={488} y={410} size={8}>卫</Note>
    <Note x={494} y={470} size={8}>卧室</Note>
    <Note x={564} y={458} size={8}>厅</Note>
    <Note x={647} y={426} size={8}>会客室</Note>
    <Note x={665} y={430} vertical>M1</Note>

    {columnAxes.map((x, i) => (
      <React.Fragment key={x}>
        <Bubble x={x} y={272.5} label={String(i + 1)} />
        <Bubble x={x} y={587.5} label={String(i + 1)} />
      </React.Fragment>
    ))}
    <Bubble x={381} y={352} />
    <Bubble x={381} y={398} label="-" />
    <Bubble x={381} y={431.5} label="D" />
    <Bubble x={381} y={508} label="A" />
    <Bubble x={744} y={352} />
    <Bubble x={746} y={462} label="C" />
    <Bubble x={746} y={484} label="I" />
    <Bubble x={746} y={508} label="A" />

    <Compass x={559.5} y={251} turn={180} label="北" />
    <Compass x={958} y={450} turn={-90} label="东" />
    <Compass x={559.5} y={649} turn={0} label="南" />
  </svg>
);

/* ---------- page ---------- */

const fields: { id: string; label: string; value: string; text?: boolean }[] = [
  { id: "plane", label: "工作平面", value: "1F" },
  { id: "name", label: "视图名称", value: "1F", text: true },
  { id: "scale", label: "视图比例", value: "1:100" },
  { id: "mode", label: "显示模式", value: "着色：有光照，无边线" },
  { id: "detail", label: "详细程度", value: "粗略" },
];

export default function App() {
  return (
    <Shell>
      <GlobalStyle />
      <TitleBar>
        <AppLogo />
        <WindowTitle>GAP - 小别墅</WindowTitle>
        <WindowButtons>
          <WindowButton aria-label="最小化">
            <svg width="10" height="10" stroke="#888"><path d="M0 4.500h10" /></svg>
          </WindowButton>
          <WindowButton aria-label="最大化">
            <svg width="10" height="10" stroke="#888" fill="none"><path d="M.5.5h9v9h-9z" /></svg>
          </WindowButton>
          <WindowButton aria-label="关闭">
            <svg width="10" height="10" stroke="#888"><path d="M0 0l10 10M10 0 0 10" /></svg>
          </WindowButton>
        </WindowButtons>
      </TitleBar>

      <MenuBar>
        <CloudButton>
          <CloudLogo />
          <BarLabel>云协同</BarLabel>
        </CloudButton>
        <RibbonTab>建筑</RibbonTab>
        <QuickBar>
          <QuickButton aria-label="新建"><QuickIcon name="create" /><Chevron color="#b6c0ca" /></QuickButton>
          <QuickButton aria-label="粘贴"><QuickIcon name="paste" /><Chevron color="#dfe4e8" /></QuickButton>
          <QuickButton aria-label="保存"><QuickIcon name="save" /></QuickButton>
          <QuickButton aria-label="撤销"><QuickIcon name="undo" /></QuickButton>
          <QuickButton aria-label="重做"><QuickIcon name="redo" /></QuickButton>
          <QuickButton $wide><QuickIcon name="palette" /><BarLabel>样式管理</BarLabel><Chevron color="#fff" /></QuickButton>
          <QuickButton $wide $muted><QuickIcon name="magnet" /><BarLabel>界面设定</BarLabel><Chevron color="#b6c0ca" /></QuickButton>
        </QuickBar>
        <HelpButton aria-label="帮助">
          <svg width="13" height="13" viewBox="0 0 13 13">
            <circle cx="6.500" cy="6.500" r="6" fill="#cfdde7" />
            <path d="M4.500 5a2 2 0 1 1 2.700 1.900c-.7.300-.7.700-.7 1.300M6.500 9.500v1.300" fill="none" stroke="#33404d" strokeWidth="1.300" />
          </svg>
        </HelpButton>
      </MenuBar>

      <Ribbon>
        <RibbonScroll aria-label="向左滚动">&lt;</RibbonScroll>
        <RibbonViewport>
          <RibbonStrip>
            {ribbonGroups.map((group, i) => (
              <React.Fragment key={i}>
                {i > 0 && <RibbonDivider />}
                <RibbonGroup>
                  {group.map((t) => (
                    <Tool key={t.label} $wide={t.wide}>
                      <ToolIcon name={t.icon} menu={t.menu} />
                      {t.label}
                    </Tool>
                  ))}
                </RibbonGroup>
              </React.Fragment>
            ))}
          </RibbonStrip>
        </RibbonViewport>
        <RibbonScroll aria-label="向右滚动" disabled>&gt;</RibbonScroll>
      </Ribbon>

      <Body>
        <Browser>
          <BrowserTools>
            <BrowserTool aria-label="项目浏览器">
              <svg width="14" height="14" fill="none" stroke={C.blue} strokeWidth="2"><path d="M1 1h12v12H1zM5.500 1v12" /></svg>
            </BrowserTool>
            <BrowserTool aria-label="筛选">
              <svg width="18" height="16" viewBox="0 0 18 16" fill="none" stroke="#4d5a68" strokeWidth="1.800">
                <path d="M1.500 1.500h15L10.800 8v6L7.200 11.500V8z" />
              </svg>
            </BrowserTool>
          </BrowserTools>
          <TreePane>
            <Tree>
              {nodes.map((n, i) => (
                <TreeNode key={i} node={n} />
              ))}
            </Tree>
            <Track $w={8}>
              <Thumb $top={159} $size={335} />
            </Track>
          </TreePane>
          <CollapseHandle aria-label="收起">
            <Chevron dir="left" />
          </CollapseHandle>
        </Browser>

        <Main>
          <DocTabs>
            <DocTab>
              <DocName>
                <svg width="15" height="15" viewBox="0 0 15 15" fill="none">
                  <path d="M.5.5h7l4 4v9H.5z" fill="#dfe7ed" stroke={C.ink} strokeWidth=".9" />
                  <path d="M2 7l4-4M2 11l6-6" stroke={C.slate} />
                  <path d="M7.500 .5v4h4" fill="#fff" stroke={C.ink} strokeWidth=".8" />
                  <path d="M4.500 10.500l3-3.500h7v3.500l-3 3.500h-7z" fill="#fff" stroke={C.blue} strokeWidth="1.300" />
                  <path d="M4.500 11h7l3-3.500M11.500 11v3" stroke={C.blue} />
                </svg>
                1F
              </DocName>
              <button aria-label="关闭 1F">
                <svg width="11" height="11" stroke="#4f5b66" strokeWidth="1.300"><path d="M.5.500l10 10M10.500.500l-10 10" /></svg>
              </button>
            </DocTab>
          </DocTabs>

          <Workspace>
            <Viewport>
              <FloorPlan />
            </Viewport>

            <SideColumn>
              <Panel>
                <PanelTitle>通用编辑</PanelTitle>
                <Scroller>
                  <EditGrid>
                    {editArt.map(([name, art]) => (
                      <EditButton key={name} aria-label={name}>
                        <svg width="24" height="24" viewBox="0 0 24 24">{art}</svg>
                      </EditButton>
                    ))}
                  </EditGrid>
                  <Track $w={8}>
                    <Thumb $top={0} $size={146} />
                  </Track>
                </Scroller>
              </Panel>

              <Panel $grow>
                <PanelTitle>属性面板</PanelTitle>
                <TypeRow>
                  <TypePicker aria-haspopup="listbox">
                    <TypeThumb>
                      <svg width="12" height="27" viewBox="0 0 12 27" fill="none">
                        <path d="M.5 4.500 3.500.500h8v22l-3 4h-8z" fill="#e6e8ea" stroke="#a9adb1" />
                        <path d="M1 4.500 3.700 1H11L8.500 4.500z" fill="#fff" />
                        <path d="M8.500 4.500 11 1.500V22l-2.500 4z" fill="#c9cccf" />
                      </svg>
                    </TypeThumb>
                    <TypeText>
                      视图名称
                      <br />
                      平面视图
                    </TypeText>
                    <Chevron color="#85898e" />
                  </TypePicker>
                  <TypeButtons>
                    <TypeButton aria-label="新增类型">
                      <svg width="12" height="12" stroke="#6d7277" strokeWidth="1.500"><path d="M6 .5v11M.5 6h11" /></svg>
                    </TypeButton>
                    <TypeButton aria-label="类型设置">
                      <svg width="12" height="12" stroke="#5d6267"><path d="M1 2.500h10M1 6h10M1 9.500h10M3.500 1v3M8.500 4.500v3M3.500 8v3" strokeWidth="1.300" /></svg>
                    </TypeButton>
                  </TypeButtons>
                </TypeRow>
                <PropsScroller>
                  <Properties>
                    <SectionHead>
                      <Chevron />
                      基本属性
                    </SectionHead>
                    {fields.map((s) => (
                      <Field key={s.id}>
                        <FieldLabel htmlFor={s.id}>{s.label}</FieldLabel>
                        <FieldBox>
                          {s.text ? (
                            <TextInput id={s.id} defaultValue={s.value} />
                          ) : (
                            <>
                              <Select id={s.id} defaultValue={s.value}>
                                <option>{s.value}</option>
                              </Select>
                              <Chevron />
                            </>
                          )}
                        </FieldBox>
                      </Field>
                    ))}
                    <SectionHead $compact>
                      <Chevron />
                      视图范围
                    </SectionHead>
                    <CheckRow>
                      <label htmlFor="crop">视口裁剪</label>
                      <Checkbox id="crop" type="checkbox" defaultChecked />
                    </CheckRow>
                    <CheckRow>
                      <label htmlFor="cropbox">显示裁剪框</label>
                      <Checkbox id="cropbox" type="checkbox" />
                    </CheckRow>
                  </Properties>
                  <Track $w={6}>
                    <Thumb $top={0} $size={165} />
                  </Track>
                </PropsScroller>
              </Panel>
            </SideColumn>
          </Workspace>
        </Main>
      </Body>

      <StatusBar>
        <StatusButton aria-label="选择组">
          <svg width="15" height="15" fill="none" stroke="#7d7f82">
            <path d="M.5.5h6v6h-6zM8.500.500h6v6h-6zM8.500 8.500h6v6h-6z" />
            <path d="M.5 8.500h6v6h-6z" strokeDasharray="2 2" />
          </svg>
        </StatusButton>
        <StatusButton aria-label="编辑组">
          <svg width="15" height="15" fill="none" stroke="#c3c6ca">
            <path d="M.5.5h6v6h-6zM8.500.500h6v6h-6zM8.500 8.500h6v6h-6z" />
            <path d="M.5 8.500h6v6h-6z" stroke="#7d7f82" />
          </svg>
        </StatusButton>
        <StatusButton aria-label="重置">
          <svg width="16" height="16" fill="none" stroke={C.ink} strokeWidth="1.300">
            <path d="M1 1h5.500v5.500H1zM9 1h5.500v5.500H9zM1 9h5.500v5.500H1z" fill="#e4eaf0" />
            <path d="M9.500 8.500v3h3M10 11c2-3 5.500-2 5.500 1s-2 3.500-4 3" stroke={C.blue} strokeWidth="1.500" />
          </svg>
        </StatusButton>
        <StatusDivider />
        <StatusButton aria-label="网格">
          <svg width="13" height="13" viewBox="0 0 13 13" fill="none">
            <path d="M.5.5h12v12H.5z" fill="#c5d5df" stroke="#7e97a8" />
            <path d="M3.500 0v13M6.500 0v13M9.500 0v13M0 3.500h13M0 6.500h13M0 9.500h13" stroke="#7e97a8" strokeWidth=".8" />
          </svg>
        </StatusButton>
        <StatusDivider />
        <Spacer />
        <StatusDivider $tight />
        <StatusButton aria-label="提示" $w={24}>
          <svg width="10" height="16" viewBox="0 0 10 16">
            <path d="M5 .5a4.500 4.500 0 0 0-4.500 4.500C.500 7.500 3 8.500 3 11h4c0-2.500 2.500-3.500 2.500-6A4.500 4.500 0 0 0 5 .5z" fill="#f0f0f0" stroke="#c6c6c6" />
            <path d="M3 11.500h4V14L5 15.500 3 14z" fill="#a8a8a8" />
          </svg>
        </StatusButton>
        <StatusButton aria-label="视图窗口" $w={24}>
          <svg width="15" height="15" viewBox="0 0 15 15" fill="none">
            <path d="M.5.500h13v13H.500z" fill={C.light} stroke={C.ink} />
            <path d="M0 0h14v3.500H0z" fill={C.ink} />
            <circle cx="10.500" cy="10.500" r="4" fill="#fff" stroke={C.blue} />
            <path d="M9 9v3M10.500 8.500V12M12 9v3" stroke={C.blue} strokeWidth=".8" />
          </svg>
        </StatusButton>
        <StatusButton aria-label="三维" $w={24}>
          <svg width="13" height="14" viewBox="0 0 13 14" fill="none">
            <path d="M.5 3.500l3-3h9v10l-3 3h-9z" fill={C.light} stroke={C.slate} />
            <path d="M1 3.500l2.500-2.500H12L9.500 3.500z" fill="#fff" />
            <path d="M9.500 3.500 12 1v9.500L9.500 13z" fill={C.mid} />
          </svg>
        </StatusButton>
        <StatusButton aria-label="缩放" $w={21}>
          <svg width="11" height="11" viewBox="0 0 12 12" fill="none" stroke="#7e97a8">
            <circle cx="5" cy="5" r="4.500" />
            <path d="M5 3v4M3 5h4M8.500 8.500l3 3" />
          </svg>
        </StatusButton>
      </StatusBar>
    </Shell>
  );
}
